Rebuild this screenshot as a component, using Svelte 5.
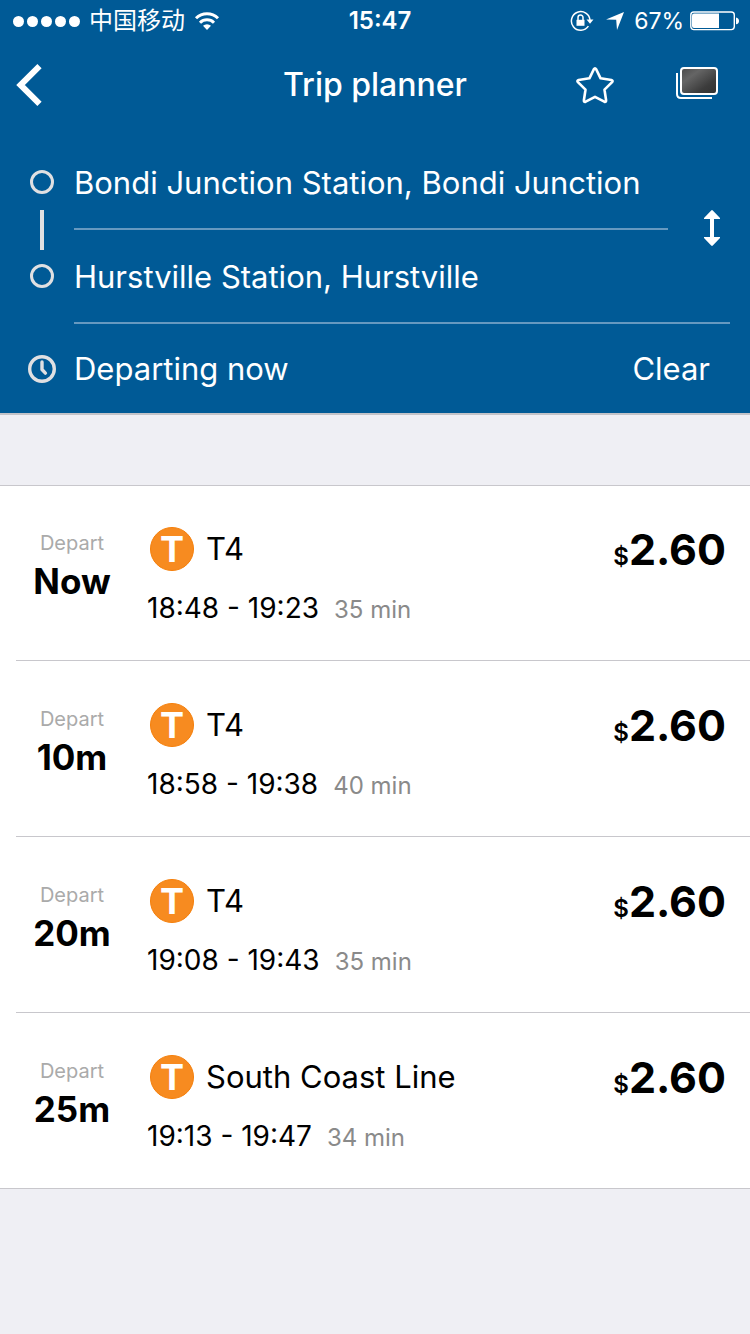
<script lang="ts">
	type Trip = {
		depart: string;
		line: string;
		times: string;
		duration: string;
		fare: string;
	};

	let origin = 'Bondi Junction Station, Bondi Junction';
	let destination = 'Hurstville Station, Hurstville';

	const trips: Trip[] = [
		{ depart: 'Now', line: 'T4', times: '18:48 - 19:23', duration: '35 min', fare: '2.60' },
		{ depart: '10m', line: 'T4', times: '18:58 - 19:38', duration: '40 min', fare: '2.60' },
		{ depart: '20m', line: 'T4', times: '19:08 - 19:43', duration: '35 min', fare: '2.60' },
		{ depart: '25m', line: 'South Coast Line', times: '19:13 - 19:47', duration: '34 min', fare: '2.60' }
	];

	function swap() {
		[origin, destination] = [destination, origin];
	}

	function clear() {
		origin = '';
		destination = '';
	}
</script>

<header>
	<div class="status">
		<div class="carrier">
			<span class="signal">
				{#each Array(5) as _}
					<i></i>
				{/each}
			</span>
			<span>中国移动</span>
			<svg class="wifi" width="26" height="20" viewBox="0 0 26 20" fill="none" stroke="#fff" stroke-width="3">
				<path d="M2 7.2a15.6 15.6 0 0 1 22 0" />
				<path d="M6 11.7a10 10 0 0 1 14 0" />
				<path d="M13 19l-4-4.2a5.8 5.8 0 0 1 8 0z" fill="#fff" stroke="none" />
			</svg>
		</div>
		<time>15:47</time>
		<div class="battery">
			<svg width="24" height="22" viewBox="0 0 24 22" fill="none" stroke="#fff" stroke-width="1.5">
				<path d="M18.4 16.2A9.3 9.3 0 1 1 20 10.5" />
				<path d="M16.5 9.5h7L20 13.8z" fill="#fff" stroke="none" />
				<path d="M6.5 9.8h8v6h-8z" fill="#fff" stroke="none" />
				<path d="M8 10V7.6a2.5 2.5 0 0 1 5 0V10" />
			</svg>
			<svg class="location" width="18" height="18" viewBox="0 0 18 18">
				<path d="M18 0L11 18l-.8-10.2L0 7.4z" fill="#fff" />
			</svg>
			<span>67%</span>
			<svg width="49" height="20" viewBox="0 0 49 20" fill="none">
				<rect x=".8" y="1" width="43.5" height="17.6" rx="3" stroke="#fff" stroke-width="1.4" />
				<path d="M2 4.5Q2 2.5 4 2.5H29v14.6H4Q2 17 2 15z" fill="#fff" />
				<path d="M46 6.5q3 .6 3 3.4t-3 3.4z" fill="#fff" />
			</svg>
		</div>
	</div>

	<nav>
		<button class="back" aria-label="Back">
			<svg width="26" height="42" viewBox="0 0 26 42" fill="none" stroke="#fff" stroke-width="6">
				<path d="M23.5 2.2L4.5 21l19 18.8" />
			</svg>
		</button>
		<h1>Trip planner</h1>
		<div class="actions">
			<button aria-label="Add to favourites">
				<svg width="40" height="38" viewBox="0 0 40 38" fill="none" stroke="#fff" stroke-width="2.6" stroke-linejoin="round">
					<path d="M18.9 3.2q1.1-2 2.2 0l4.5 9.1 10.8 1.7q2 .6.7 2.1l-7.6 7.6 1.6 10.6q.1 2-1.8 1.4L20 30.8l-9.3 4.9q-2 .6-1.8-1.4l1.6-10.6L2.9 16.1q-1.3-1.5.7-2.1l10.8-1.7z" />
				</svg>
			</button>
			<button aria-label="Saved cards">
				<svg width="44" height="38" viewBox="0 0 44 38" fill="none" stroke="#fff" stroke-width="2">
					<defs>
						<linearGradient id="card" x1="0" y1="0" x2="1" y2="1">
							<stop offset="0" stop-color="#4a4a4a" />
							<stop offset=".3" stop-color="#656565" />
							<stop offset=".7" stop-color="#3c3c3c" />
							<stop offset="1" stop-color="#303030" />
						</linearGradient>
					</defs>
					<path d="M2 7v21q0 4 4 4h31" />
					<rect x="6" y="2" width="36" height="26" rx="3" fill="url(#card)" />
				</svg>
			</button>
		</div>
	</nav>

	<form>
		<div class="route">
			<span class="stop from"></span>
			<span class="link"></span>
			<span class="stop to"></span>
			<input class="origin" type="text" aria-label="From" bind:value={origin} />
			<input class="destination" type="text" aria-label="To" bind:value={destination} />
			<button class="swap" type="button" aria-label="Swap stops" on:click={swap}>
				<svg width="16" height="36" viewBox="0 0 16 36" fill="#fff">
					<path d="M7.2.4q.8-.8 1.6 0L16 8v1h-6v18h6v1l-7.2 7.6q-.8.8-1.6 0L0 28v-1h6V9H0V8z" />
				</svg>
			</button>
		</div>
		<div class="when">
			<svg width="28" height="28" viewBox="0 0 28 28" fill="none" stroke="#e0e0e2" stroke-width="3.4">
				<circle cx="14" cy="14" r="12.3" />
				<path d="M14 7v7.5l3.4 3.6" stroke-linecap="round" stroke-linejoin="round" />
			</svg>
			<button class="departing" type="button">Departing now</button>
			<button class="clear" type="button" on:click={clear}>Clear</button>
		</div>
	</form>
</header>

<ul>
	{#each trips as trip}
		<li>
			<div class="depart">
				<small>Depart</small>
				<strong>{trip.depart}</strong>
			</div>
			<div class="journey">
				<div class="line">
					<span class="badge">T</span>
					<span>{trip.line}</span>
				</div>
				<div class="times">
					<span>{trip.times}</span>
					<small>{trip.duration}</small>
				</div>
			</div>
			<div class="fare"><small>$</small>{trip.fare}</div>
		</li>
	{/each}
</ul>

<style>
	:global(body) {
		margin: 0;
		background: #efeff4;
		font-family: Inter, 'Noto Sans CJK SC', sans-serif;
	}

	header {
		background: #005a96;
		border-bottom: 2px solid #c3c3c8;
		color: #fff;
	}

	svg {
		display: block;
		flex: none;
	}

	button,
	input {
		margin: 0;
		padding: 0;
		border: 0;
		background: none;
		color: inherit;
		font: inherit;
	}

	button {
		cursor: pointer;
	}

	.status {
		display: grid;
		grid-template-columns: 1fr auto 1fr;
		align-items: center;
		height: 41px;
		padding: 0 11px 0 13px;
		font-size: 24px;
		line-height: 42px;
	}

	.status time {
		padding-left: 8px;
		font-weight: 600;
	}

	.carrier,
	.battery {
		display: flex;
		align-items: center;
		gap: 8px;
	}

	.carrier {
		gap: 9px;
	}

	.battery {
		justify-content: flex-end;
		gap: 6px;
		font-size: 23px;
	}

	.location {
		margin: 0 4px 0 6px;
	}

	.signal {
		display: flex;
		gap: 3px;
	}

	.signal i {
		width: 11px;
		height: 11px;
		border-radius: 50%;
		background: #fff;
	}

	nav {
		display: grid;
		grid-template-columns: 1fr auto 1fr;
		align-items: center;
		height: 87px;
		padding: 0 31px 8px 16px;
	}

	nav h1 {
		margin: 0;
		padding-left: 15px;
		font-size: 32px;
		font-weight: 500;
		line-height: 40px;
	}

	.back {
		justify-self: start;
	}

	.actions {
		display: flex;
		justify-content: flex-end;
		align-items: center;
		gap: 60px;
	}

	.route {
		display: grid;
		grid-template-columns: 74px 1fr 62px 20px;
		grid-template-rows: 94px 94px;
		font-size: 31px;
	}

	.route input {
		min-width: 0;
		border-bottom: 2px solid #6699c0;
		outline: none;
	}

	.origin {
		grid-area: 1 / 2;
	}

	.destination {
		grid-area: 2 / 2 / auto / span 2;
	}

	.stop {
		box-sizing: border-box;
		width: 24px;
		height: 24px;
		margin: 34px 0 0 30px;
		border: 3px solid #e0e0e2;
		border-radius: 50%;
	}

	.from {
		grid-area: 1 / 1;
	}

	.to {
		grid-area: 2 / 1;
	}

	.link {
		grid-area: 1 / 1 / span 2 / auto;
		align-self: center;
		width: 4px;
		height: 40px;
		margin-left: 40px;
		background: #e0e0e2;
	}

	.swap {
		grid-area: 1 / 3 / span 2 / span 2;
		align-self: center;
		justify-self: end;
		margin-right: 30px;
		padding-bottom: 4px;
	}

	.when {
		display: flex;
		align-items: center;
		height: 89px;
		padding: 0 40px 0 28px;
		font-size: 31px;
	}

	.departing {
		flex: 1;
		padding-left: 18px;
		text-align: left;
	}

	ul {
		margin: 70px 0 0;
		padding: 0;
		list-style: none;
		background: #fff;
		box-shadow: inset 0 1px #c8c7cc, inset 0 -1px #c8c7cc;
	}

	li {
		display: flex;
		align-items: flex-start;
		box-sizing: border-box;
		height: 176px;
		margin-left: 16px;
		padding: 42px 24px 0 0;
		border-bottom: 1px solid #c8c7cc;
	}

	.depart {
		display: flex;
		flex-direction: column;
		align-items: center;
		width: 112px;
		padding-top: 4px;
	}

	.depart small {
		color: #aaa;
		font-size: 20px;
		line-height: 24px;
	}

	.depart strong {
		font-size: 35px;
		font-weight: 700;
		line-height: 52px;
	}

	.journey {
		flex: 1;
		padding-left: 19px;
	}

	.line {
		display: flex;
		align-items: center;
		gap: 12px;
		padding-left: 3px;
		font-size: 31px;
		line-height: 44px;
	}

	.badge {
		box-sizing: border-box;
		width: 44px;
		height: 44px;
		border: 1px solid #f57f0a;
		border-radius: 50%;
		background: #f78b20;
		color: #fff;
		font-size: 36px;
		font-weight: 700;
		line-height: 42px;
		text-align: center;
	}

	.times {
		display: flex;
		align-items: baseline;
		gap: 15px;
		margin-top: 18px;
		font-size: 28px;
		line-height: 38px;
	}

	.times small {
		color: #8a8a8a;
		font-size: 24px;
	}

	.fare {
		font-size: 43px;
		font-weight: 700;
		line-height: 44px;
	}

	.fare small {
		font-size: 24px;
		font-weight: 600;
	}
</style>
